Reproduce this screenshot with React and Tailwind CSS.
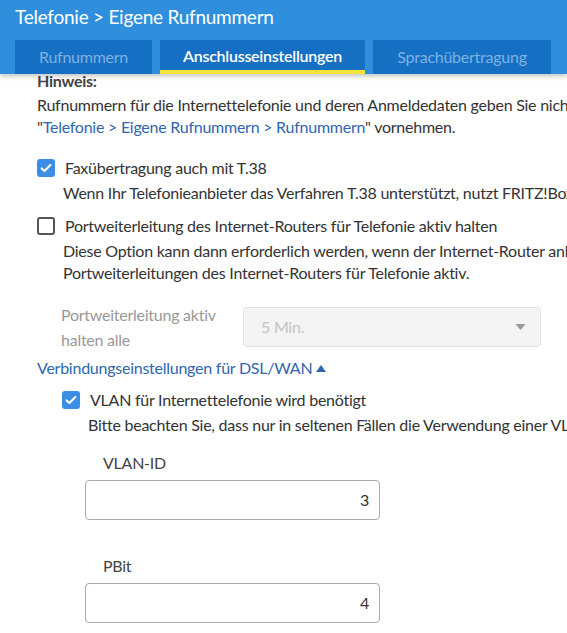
import React from 'react';

const font = { fontFamily: 'Lato, "Noto Sans", sans-serif', letterSpacing: '-0.25px' };

const CheckBox = ({ checked }) =>
  checked ? (
    <span className="flex h-[18px] w-[18px] shrink-0 items-center justify-center rounded-[3px] bg-[#3a8ee6]">
      <svg viewBox="0 0 16 16" className="h-[14px] w-[14px]" fill="none" stroke="white" strokeWidth="2.4" strokeLinecap="round" strokeLinejoin="round">
        <path d="M3 8.5l3.2 3L13 4.5" />
      </svg>
    </span>
  ) : (
    <span className="h-[18px] w-[18px] shrink-0 rounded-[3px] border-2 border-[#555]" />
  );

const Option = ({ checked, label, children, className = '' }) => (
  <div className={className}>
    <label className="flex items-center gap-[10px]">
      <CheckBox checked={checked} />
      <span className="text-[16px] leading-[22px] text-[#333]">{label}</span>
    </label>
    <div className="mt-[3px] pl-[26px] text-[16px] leading-[22px] whitespace-nowrap text-[#333]">{children}</div>
  </div>
);

const Tab = ({ children, active }) => (
  <div
    className={`flex h-[34px] items-center justify-center bg-[#1570c3] text-[16px] ${
      active ? 'border-b-[4px] border-[#f5e33a] pt-[2px] font-semibold text-white' : 'text-[#7fb1e3]'
    }`}
  >
    {children}
  </div>
);

const NumberField = ({ label, value }) => (
  <div className="pl-[85px]">
    <div className="pl-[18px] text-[16px] leading-[22px] text-[#444]">{label}</div>
    <div className="mt-[6px] flex h-[40px] w-[295px] items-center justify-end rounded-[4px] border border-[#aaa] pr-[10px] text-[16px] text-[#333]">
      {value}
    </div>
  </div>
);

export default function App() {
  return (
    <div className="h-[633px] w-[567px] overflow-hidden bg-white" style={font}>
      <div className="relative z-10 h-[74px] bg-[#2f8fdd] shadow-[0_2px_5px_rgba(0,0,0,0.25)]">
        <div className="px-[15px] pt-[4px] text-[19px] leading-[26px] text-white">Telefonie &gt; Eigene Rufnummern</div>
        <div className="mt-[10px] flex gap-[8px] pl-[15px]">
          <div className="w-[137px]">
            <Tab>Rufnummern</Tab>
          </div>
          <div className="w-[205px]">
            <Tab active>Anschlusseinstellungen</Tab>
          </div>
          <div className="w-[178px]">
            <Tab>Sprachübertragung</Tab>
          </div>
        </div>
      </div>

      <div className="-mt-[3px] pl-[37px]">
        <div className="text-[16px] leading-[20px] font-bold text-[#444]">Hinweis:</div>
        <p className="mt-[3px] text-[16px] leading-[22px] whitespace-nowrap text-[#333]">
          Rufnummern für die Internettelefonie und deren Anmeldedaten geben Sie nicht
          <br />"<span className="text-[#2f66ad]">Telefonie &gt; Eigene Rufnummern &gt; Rufnummern</span>" vornehmen.
        </p>

        <Option checked label="Faxübertragung auch mit T.38" className="mt-[19px]">
          Wenn Ihr Telefonieanbieter das Verfahren T.38 unterstützt, nutzt FRITZ!Box d
        </Option>

        <Option label="Portweiterleitung des Internet-Routers für Telefonie aktiv halten" className="mt-[11px]">
          Diese Option kann dann erforderlich werden, wenn der Internet-Router anko
          <br />
          Portweiterleitungen des Internet-Routers für Telefonie aktiv.
        </Option>

        <div className="mt-[18px] flex items-center pl-[24px]">
          <div className="w-[182px] text-[16px] leading-[25px] text-[#999]">
            Portweiterleitung aktiv
            <br />
            halten alle
          </div>
          <div className="flex h-[40px] w-[298px] items-center justify-between rounded-[4px] border border-[#e2e2e2] bg-[#f4f4f4] pr-[14px] pl-[17px] text-[16px] text-[#c4c4c4]">
            5 Min.
            <svg viewBox="0 0 10 6" className="h-[6px] w-[11px]" fill="#999">
              <path d="M0 0h10L5 6z" />
            </svg>
          </div>
        </div>

        <div className="mt-[5px] flex items-center gap-[4px] text-[16px] leading-[22px] text-[#2f66ad]">
          Verbindungseinstellungen für DSL/WAN
          <svg viewBox="0 0 10 7" className="h-[7px] w-[10px]" fill="#2f66ad">
            <path d="M5 0l5 7H0z" />
          </svg>
        </div>

        <Option checked label="VLAN für Internettelefonie wird benötigt" className="mt-[10px] pl-[25px]">
          Bitte beachten Sie, dass nur in seltenen Fällen die Verwendung einer VLA
        </Option>
      </div>

      <div className="mt-[16px]">
        <NumberField label="VLAN-ID" value="3" />
        <div className="h-[35px]" />
        <NumberField label="PBit" value="4" />
      </div>
    </div>
  );
}
